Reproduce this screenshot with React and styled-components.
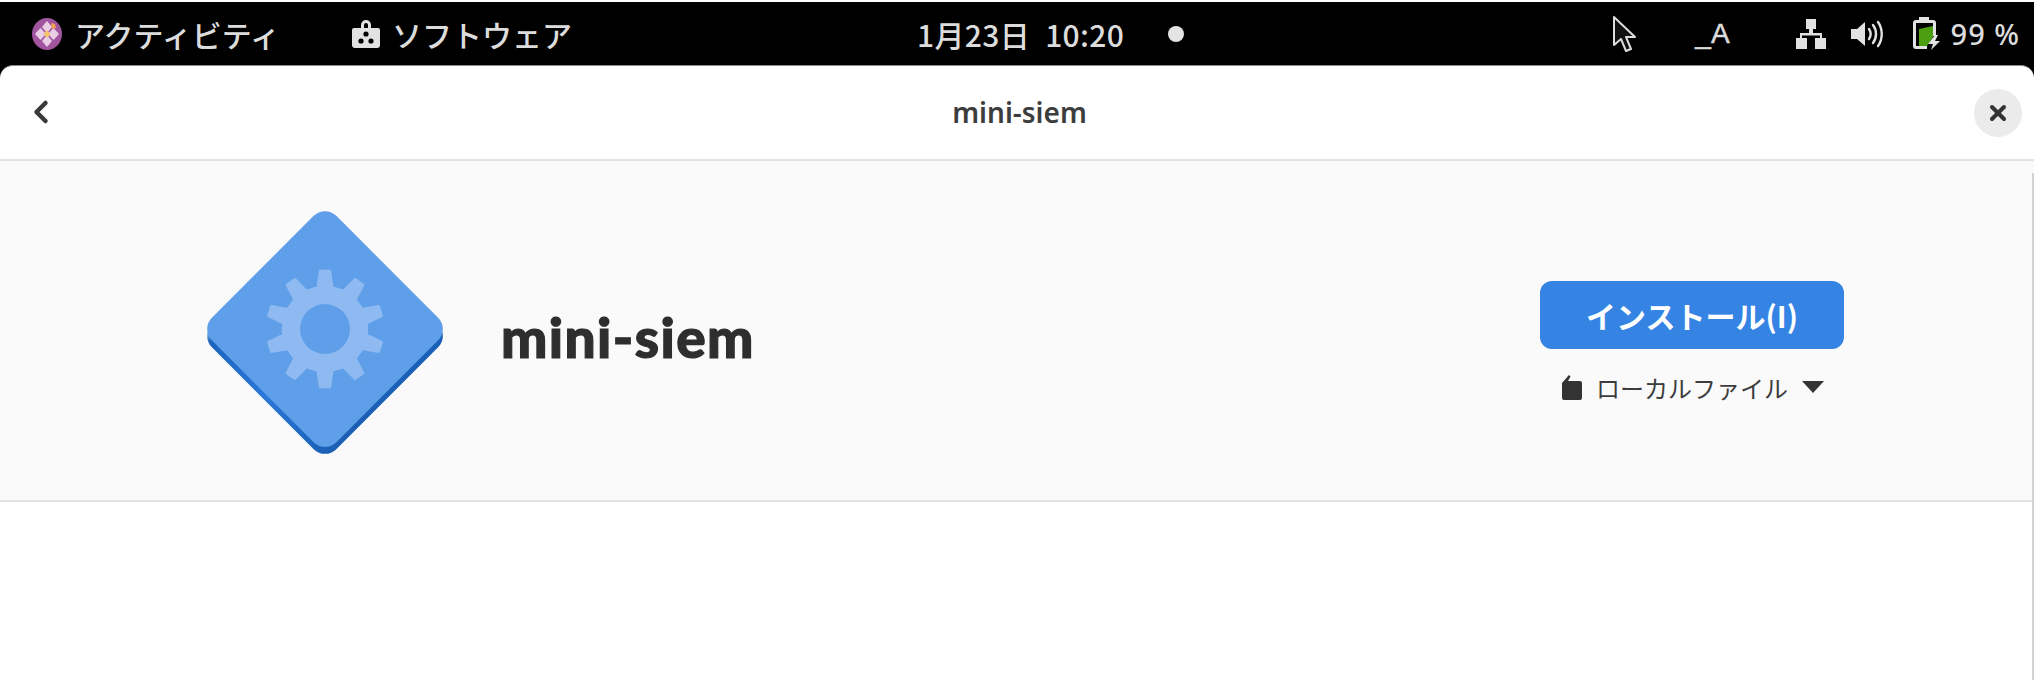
import React from 'react'
import styled, { createGlobalStyle } from 'styled-components'
import { ChevronLeft, X } from 'lucide-react'

const FONT = `"Noto Sans", "Noto Sans CJK JP", sans-serif`
const JP_FONT = `"Noto Sans CJK JP", "Noto Sans", sans-serif`

const GlobalStyle = createGlobalStyle`
  html, body {
    margin: 0;
    padding: 0;
    background: #fff;
    font-family: ${FONT};
  }
`

const Page = styled.div`
  width: 2034px;
  height: 680px;
  overflow: hidden;
  display: flex;
  flex-direction: column;
  background: #000;
  border-top: 2px solid #fff;
  box-sizing: border-box;
`

const TopBar = styled.div`
  height: 63px;
  flex: none;
  display: grid;
  grid-template-columns: 917px auto 1fr;
  align-items: center;
  color: #dcdcdc;
  font-family: ${JP_FONT};
  font-size: 30px;
  font-weight: 500;
  line-height: 1;
`

const BarLeft = styled.div`
  display: flex;
  align-items: center;
  padding-left: 31px;
`

const BarItem = styled.div`
  display: flex;
  align-items: center;
  gap: ${p => p.$gap}px;
  margin-right: ${p => p.$after || 0}px;
  white-space: nowrap;
`

const Clock = styled.div`
  display: flex;
  align-items: center;
  font-size: 30px;
  letter-spacing: 0.35px;
  word-spacing: 8px;
  white-space: nowrap;
`

const Dot = styled.span`
  width: 16px;
  height: 16px;
  border-radius: 50%;
  background: #e4e4e4;
  margin-left: 44px;
`

const BarRight = styled.div`
  display: flex;
  align-items: center;
  justify-content: flex-end;
  padding-right: 14px;
`

const InputLabel = styled.span`
  font-family: "Liberation Sans", sans-serif;
  font-size: 28px;
  -webkit-text-stroke: 0.5px #dcdcdc;
  margin: 0 66px 0 57px;
`

const VolumeSlot = styled.span`
  display: flex;
  margin: 0 29px 0 25px;
`

const Percent = styled.span`
  font-family: ${FONT};
  font-size: 29px;
  margin-left: 10px;
  letter-spacing: 1px;
`

const Window = styled.div`
  position: relative;
  flex: 1;
  display: flex;
  flex-direction: column;
  background: #fff;
  border-top: 1px solid #8a8a8a;
  border-radius: 13px 13px 0 0;
  overflow: hidden;
`

const Header = styled.header`
  height: 93px;
  flex: none;
  box-sizing: content-box;
  display: flex;
  align-items: center;
  justify-content: space-between;
  padding: 0 12px 0 23px;
  border-bottom: 2px solid #e2e2e2;
  color: #333;
`

const BackButton = styled.div`
  width: 42px;
  display: flex;
  margin-bottom: 2px;
  color: #3a3a3a;
`

const Title = styled.h1`
  margin: 0 0 2px;
  font-size: 28px;
  font-weight: 600;
  color: #3d3d3d;
`

const CloseButton = styled.div`
  width: 48px;
  height: 48px;
  border-radius: 50%;
  background: #ebebeb;
  display: flex;
  align-items: center;
  justify-content: center;
  color: #333;
`

const Hero = styled.section`
  height: 341px;
  flex: none;
  box-sizing: border-box;
  display: flex;
  align-items: center;
  background: #fafafa;
  border-bottom: 2px solid #e2e2e2;
  padding: 6px 190px 0 207px;
`

const AppName = styled.h2`
  margin: 6px 0 0 58px;
  font-family: Lato, ${FONT};
  font-size: 55px;
  font-weight: 900;
  letter-spacing: 1.4px;
  -webkit-text-stroke: 1.2px #2e2e2e;
  color: #2e2e2e;
  flex: 1;
`

const InstallColumn = styled.div`
  width: 304px;
  margin-top: 18px;
  display: flex;
  flex-direction: column;
  align-items: center;
  gap: 21px;
`

const InstallButton = styled.button`
  width: 100%;
  height: 68px;
  border: none;
  border-radius: 12px;
  background: #3584e4;
  color: #fff;
  font-family: ${JP_FONT};
  font-size: 30px;
  font-weight: 600;
`

const Source = styled.div`
  display: flex;
  align-items: center;
  gap: 14px;
  padding-left: 2px;
  font-family: ${JP_FONT};
  font-size: 24px;
  color: #3d3d3d;
`

const ScrollEdge = styled.div`
  position: absolute;
  top: 107px;
  right: 0;
  bottom: 0;
  width: 2px;
  background: #d2d2d2;
`

function gearPath(cx, cy, teeth, outer, root) {
  const step = (Math.PI * 2) / teeth
  const pts = []
  for (let i = 0; i < teeth; i++) {
    const a = -Math.PI / 2 + i * step
    const at = (r, d) => `${(cx + r * Math.cos(a + d)).toFixed(1)} ${(cy + r * Math.sin(a + d)).toFixed(1)}`
    pts.push(at(root, -step * 0.27), at(outer, -step * 0.13), at(outer, step * 0.13), at(root, step * 0.27))
  }
  return `M${pts.join('L')}Z`
}

function AppIcon() {
  return (
    <svg width="236" height="246" viewBox="0 0 236 246" style={{ flex: 'none' }}>
      <defs>
        <linearGradient id="side" x1="0" x2="1" y1="0" y2="0">
          <stop offset="0" stopColor="#9cc0ee" />
          <stop offset="0.06" stopColor="#1c64bd" />
          <stop offset="0.5" stopColor="#2a78d8" />
          <stop offset="1" stopColor="#1a5fb4" />
        </linearGradient>
      </defs>
      <rect x="30" y="37" width="176" height="176" rx="16" transform="rotate(45 118 125)" fill="url(#side)" />
      <rect x="30" y="30" width="176" height="176" rx="16" transform="rotate(45 118 118)" fill="#5f9fe9" />
      <path d={gearPath(118, 118, 10, 58, 42)} fill="#8fbaf1" stroke="#8fbaf1" strokeWidth="3" strokeLinejoin="round" />
      <circle cx="118" cy="118" r="25" fill="#5f9fe9" />
    </svg>
  )
}

function ActivitiesIcon() {
  return (
    <svg width="32" height="34" viewBox="0 0 32 34">
      <ellipse cx="16" cy="17" rx="15" ry="16" fill="#a2559f" />
      <g fill="#e9cfe6">
        <path d="M16 4l5 6-5 6-5-6z" />
        <path d="M16 18l5 6-5 6-5-6z" />
        <path d="M4 17l5.500-6 5.500 6-5.500 6z" />
        <path d="M17 17l5.500-6 5.500 6-5.500 6z" />
      </g>
      <path d="M16 13l3.500 4-3.500 4-3.500-4z" fill="#f3c56b" />
      <path d="M20 6l4 1 1 4-4 1z" fill="#eda24e" />
    </svg>
  )
}

function BagIcon() {
  return (
    <svg width="30" height="28" viewBox="0 0 30 28">
      <path d="M10 9V5a5 5 0 0 1 10 0v4h-3V5a2 2 0 0 0-4 0v4z" fill="#e2e2e2" />
      <path d="M3 8h24a2 2 0 0 1 2 2v15a3 3 0 0 1-3 3H4a3 3 0 0 1-3-3V10a2 2 0 0 1 2-2z" fill="#e2e2e2" />
      <circle cx="15" cy="14" r="2.600" fill="#000" />
      <circle cx="10" cy="21" r="2.600" fill="#000" />
      <circle cx="20" cy="21" r="2.600" fill="#000" />
    </svg>
  )
}

function CursorIcon() {
  return (
    <svg width="26" height="38" viewBox="0 0 26 38">
      <path d="M2 2v28l7-6 5 12 5-2-5-12h9z" fill="#111" stroke="#dcdcdc" strokeWidth="2" strokeLinejoin="round" />
    </svg>
  )
}

function NetworkIcon() {
  return (
    <svg width="30" height="30" viewBox="0 0 30 30">
      <path d="M10 0h10v10h-3v4h9v5h-2v-2.500H6V19H4v-5h9v-4h-3z" fill="#e2e2e2" />
      <rect x="0" y="19" width="11" height="11" fill="#e2e2e2" />
      <rect x="19" y="19" width="11" height="11" fill="#e2e2e2" />
    </svg>
  )
}

function VolumeIcon() {
  return (
    <svg width="32" height="28" viewBox="0 0 32 28">
      <path d="M0 9h6l8-7v24l-8-7H0z" fill="#e2e2e2" />
      <g fill="none" stroke="#e2e2e2" strokeWidth="2.400" strokeLinecap="round">
        <path d="M18 9c2 3 2 7 0 10" />
        <path d="M22 5c4 5 4 13 0 18" />
        <path d="M27 2c5 7 5 17 0 24" />
      </g>
    </svg>
  )
}

function BatteryIcon() {
  return (
    <svg width="29" height="33" viewBox="0 0 29 33">
      <path d="M7 0h10v3h4a3 3 0 0 1 3 3v13h-3V6H4v23h11v3H4a3 3 0 0 1-3-3V6a3 3 0 0 1 3-3h3z" fill="#e2e2e2" />
      <path d="M7 12l14-3v11l-6 9H7z" fill="#4b9e10" />
      <path d="M23 18l-7 9h5l-2 6 9-9h-5l3-6z" fill="#e2e2e2" />
    </svg>
  )
}

function FileIcon() {
  return (
    <svg width="20" height="26" viewBox="0 0 20 26">
      <path d="M2 26a2 2 0 0 1-2-2V9l7-8 1.500 1.500L6 7h12a2 2 0 0 1 2 2v15a2 2 0 0 1-2 2z" fill="#333" />
    </svg>
  )
}

function Caret() {
  return (
    <svg width="22" height="12" viewBox="0 0 22 12">
      <path d="M0 0h22L11 12z" fill="#333" />
    </svg>
  )
}

export default function App() {
  return (
    <Page>
      <GlobalStyle />
      <TopBar>
        <BarLeft>
          <BarItem $gap={12} $after={71}>
            <ActivitiesIcon />
            アクティビティ
          </BarItem>
          <BarItem $gap={11}>
            <BagIcon />
            ソフトウェア
          </BarItem>
        </BarLeft>
        <Clock>
          1月23日 10:20
          <Dot />
        </Clock>
        <BarRight>
          <CursorIcon />
          <InputLabel>_A</InputLabel>
          <NetworkIcon />
          <VolumeSlot>
            <VolumeIcon />
          </VolumeSlot>
          <BatteryIcon />
          <Percent>99 %</Percent>
        </BarRight>
      </TopBar>
      <Window>
        <Header>
          <BackButton>
            <ChevronLeft size={36} strokeWidth={3} />
          </BackButton>
          <Title>mini-siem</Title>
          <CloseButton>
            <X size={24} strokeWidth={4} />
          </CloseButton>
        </Header>
        <Hero>
          <AppIcon />
          <AppName>mini-siem</AppName>
          <InstallColumn>
            <InstallButton>インストール(I)</InstallButton>
            <Source>
              <FileIcon />
              ローカルファイル
              <Caret />
            </Source>
          </InstallColumn>
        </Hero>
        <ScrollEdge />
      </Window>
    </Page>
  )
}
